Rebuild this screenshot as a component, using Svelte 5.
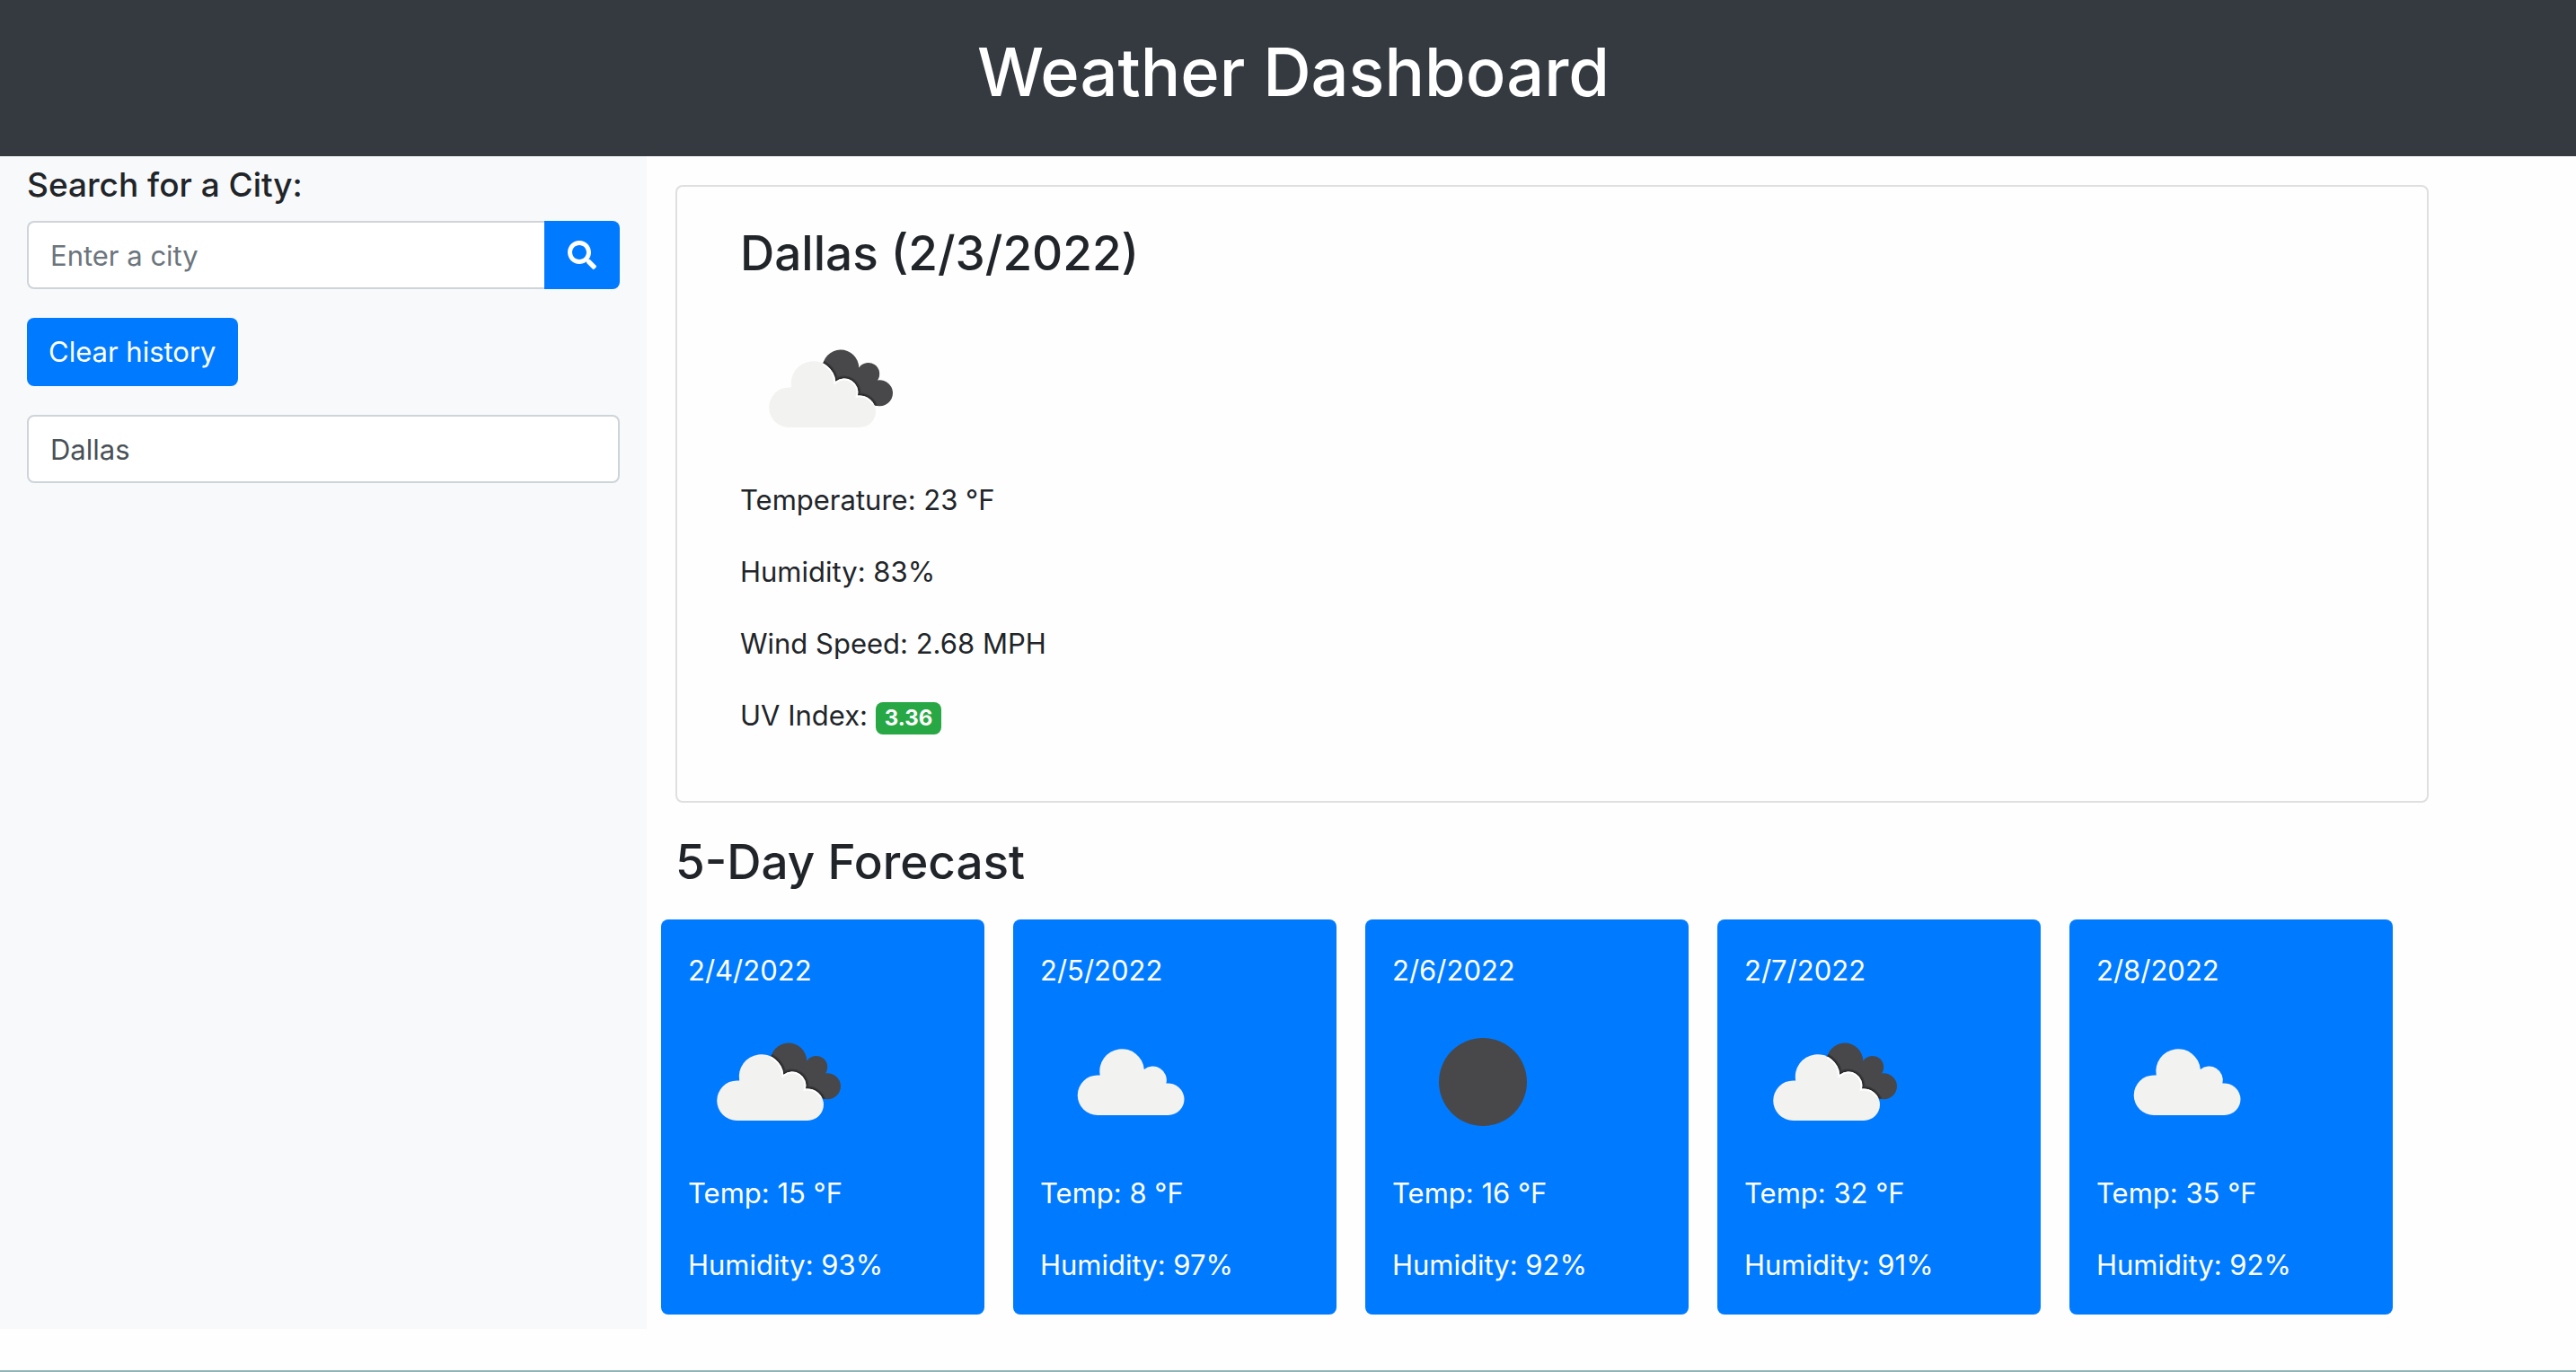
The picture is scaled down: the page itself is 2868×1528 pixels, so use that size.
<script>
  let city = $state('');
  let history = $state(['Dallas']);

  const current = {
    name: 'Dallas',
    date: '2/3/2022',
    icon: 'broken',
    temperature: 23,
    humidity: 83,
    wind: 2.68,
    uv: 3.36
  };

  const forecast = [
    { date: '2/4/2022', icon: 'broken', temp: 15, humidity: 93 },
    { date: '2/5/2022', icon: 'cloud', temp: 8, humidity: 97 },
    { date: '2/6/2022', icon: 'clear', temp: 16, humidity: 92 },
    { date: '2/7/2022', icon: 'broken', temp: 32, humidity: 91 },
    { date: '2/8/2022', icon: 'cloud', temp: 35, humidity: 92 }
  ];

  function search(event) {
    event.preventDefault();
    const name = city.trim();
    if (name && !history.includes(name)) history.push(name);
    city = '';
  }

  const cloud =
    'M54.500 144A22.300 22.300 0 0 1 54.500 99.400L57.200 99.500A24.800 24.800 0 1 1 106.300 92.900A15.400 15.400 0 0 1 130.900 108.600A17.900 17.900 0 0 1 151 126.200A17.900 17.900 0 0 1 133.200 144Z';
  const backCloud =
    'M91.700 78.300A20.300 20.300 0 0 1 132.300 77.500A12.300 12.300 0 0 1 153.100 91.500A14.500 14.500 0 1 1 148 118.200L110 104Z';
</script>

{#snippet weatherIcon(kind, id)}
  <svg class="weather-icon" viewBox="0 0 200 200" aria-hidden="true">
    {#if kind === 'clear'}
      <circle cx="101" cy="101" r="49" fill="#48484a" />
    {:else if kind === 'cloud'}
      <path d={cloud} transform="translate(9.500 -6)" fill="#f2f2f0" />
    {:else}
      <defs>
        <clipPath id="back-{id}"><path d={backCloud} /></clipPath>
        <clipPath id="front-{id}"><path d={cloud} /></clipPath>
      </defs>
      <path d={backCloud} fill="#48484a" />
      <g clip-path="url(#back-{id})">
        <path d={cloud} fill="none" stroke="#38383a" stroke-width="6" />
        <path d={cloud} fill="none" stroke="#2a2a2c" stroke-width="3" />
      </g>
      <path d={cloud} fill="#f2f2f0" />
      <g clip-path="url(#back-{id})">
        <path d={cloud} fill="none" stroke="#ffffff" stroke-width="4" clip-path="url(#front-{id})" />
      </g>
    {/if}
  </svg>
{/snippet}

<div class="page">
  <header class="banner">
    <h1>Weather Dashboard</h1>
  </header>

  <div class="columns">
    <aside class="sidebar">
      <form class="search" onsubmit={search}>
        <label for="city">Search for a City:</label>
        <div class="input-group">
          <input id="city" class="field" type="text" placeholder="Enter a city" bind:value={city} />
          <button class="button search-button" type="submit" aria-label="Search">
            <svg class="search-icon" viewBox="0 0 512 512" aria-hidden="true">
              <path
                fill="currentColor"
                d="M505 442.700L405.300 343c-4.500-4.500-10.600-7-17-7H372c27.600-35.300 44-79.700 44-128C416 93.100 322.900 0 208 0S0 93.100 0 208s93.100 208 208 208c48.300 0 92.700-16.400 128-44v16.300c0 6.400 2.500 12.500 7 17l99.700 99.700c9.400 9.400 24.600 9.400 33.900 0l28.300-28.300c9.400-9.400 9.400-24.600.1-34zM208 336c-70.700 0-128-57.200-128-128 0-70.700 57.200-128 128-128 70.700 0 128 57.200 128 128 0 70.700-57.200 128-128 128z"
              />
            </svg>
          </button>
        </div>
      </form>
      <button class="button clear-button" type="button" onclick={() => (history = [])}>Clear history</button>
      {#each history as item}
        <input class="field" type="text" readonly value={item} aria-label="Recent search" />
      {/each}
    </aside>

    <main class="content">
      <section class="today">
        <h2>{current.name} ({current.date})</h2>
        {@render weatherIcon(current.icon, 'today')}
        <p>Temperature: {current.temperature} °F</p>
        <p>Humidity: {current.humidity}%</p>
        <p>Wind Speed: {current.wind} MPH</p>
        <p>UV Index: <span class="badge">{current.uv}</span></p>
      </section>

      <h2 class="forecast-title">5-Day Forecast</h2>
      <div class="forecast">
        {#each forecast as day, i}
          <article class="day">
            <h3>{day.date}</h3>
            {@render weatherIcon(day.icon, i)}
            <p>Temp: {day.temp} °F</p>
            <p>Humidity: {day.humidity}%</p>
          </article>
        {/each}
      </div>
    </main>
  </div>
  <div class="bottom-rule"></div>
</div>

<style>
  :global(body) {
    margin: 0;
    background: #fefefe;
  }

  .page {
    display: flex;
    flex-direction: column;
    box-sizing: border-box;
    min-height: 100vh;
    color: #212529;
    font-family: Inter, 'Liberation Sans', sans-serif;
    font-size: 31px;
    line-height: 48px;
  }

  h1,
  h2,
  h3,
  p {
    margin: 0;
  }

  .banner {
    padding: 32px 16px 46px 28px;
    background: #343a40;
    color: #fff;
    text-align: center;
  }

  h1 {
    font-size: 74px;
    font-weight: 500;
    line-height: 96px;
  }

  h2 {
    font-size: 53px;
    font-weight: 500;
    line-height: 68px;
  }

  .columns {
    display: flex;
  }

  .sidebar {
    display: flex;
    flex: 0 0 720px;
    flex-direction: column;
    align-items: stretch;
    gap: 32px;
    box-sizing: border-box;
    padding: 8px 30px 32px;
    background: #f8f9fa;
  }

  .search {
    display: flex;
    flex-direction: column;
    gap: 16px;
  }

  label {
    font-size: 37px;
    font-weight: 500;
  }

  .input-group {
    display: flex;
  }

  .field {
    flex: 1 1 auto;
    box-sizing: border-box;
    min-width: 0;
    height: 76px;
    padding: 0 24px;
    border: 2px solid #ced4da;
    border-radius: 8px;
    background: #fff;
    color: #495057;
    font: inherit;
  }

  .sidebar > .field {
    flex: none;
  }

  .field::placeholder {
    color: #6c757d;
    opacity: 1;
  }

  .input-group .field {
    border-right: 0;
    border-radius: 8px 0 0 8px;
  }

  .button {
    height: 76px;
    padding: 0 26px;
    border: 0;
    border-radius: 8px;
    background: #007bff;
    color: #fff;
    font: inherit;
    cursor: pointer;
  }

  .search-button {
    border-radius: 0 8px 8px 0;
  }

  .search-icon {
    display: block;
    width: 32px;
    height: 32px;
  }

  .clear-button {
    align-self: flex-start;
    padding: 0 24px;
  }

  .content {
    flex: 1 1 auto;
    min-width: 0;
    padding: 32px 164px 16px 32px;
  }

  .today {
    padding: 40px 70px 72px;
    border: 2px solid #dfdfdf;
    border-radius: 8px;
  }

  .today h2 {
    margin-bottom: 16px;
  }

  h3,
  p {
    padding-top: 2px;
    line-height: 46px;
  }

  p + p {
    margin-top: 32px;
  }

  .weather-icon {
    display: block;
    width: 200px;
    height: 200px;
  }

  .badge {
    display: inline-block;
    padding: 6px 10px;
    border-radius: 8px;
    background: #28a745;
    color: #fff;
    font-size: 24px;
    font-weight: 700;
    line-height: 24px;
  }

  .forecast-title {
    margin: 32px 0 30px;
  }

  .forecast {
    display: flex;
    gap: 32px;
    margin-left: -16px;
  }

  .day {
    flex: 0 0 360px;
    box-sizing: border-box;
    padding: 32px 30px;
    border-radius: 8px;
    background: #007bff;
    color: #fff;
  }

  h3 {
    font-size: 31px;
    font-weight: 400;
  }

  .bottom-rule {
    height: 2px;
    margin-top: auto;
    background: #91b4b9;
  }
</style>
